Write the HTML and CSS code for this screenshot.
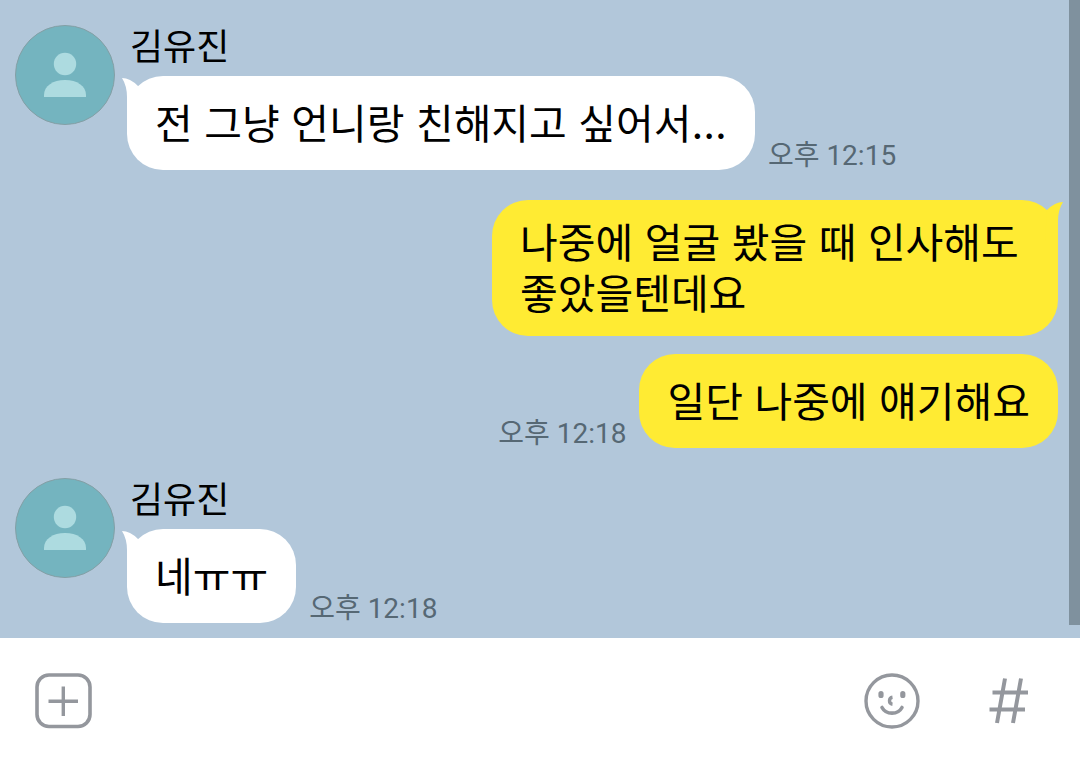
FILE: index.html
```
<!DOCTYPE html>
<html lang="ko">
<head>
  <meta charset="UTF-8">
  <meta name="viewport" content="width=device-width, initial-scale=1.0">
  <title>김유진</title>
  <link rel="stylesheet" href="styles.css">
</head>
<body>

  <!-- Chat -->
  <main class="chat">
    <div class="message received">
      <svg class="avatar" viewBox="0 0 100 100" aria-hidden="true">
        <circle class="avatar-bg" cx="50" cy="50" r="49.5"/>
        <circle class="avatar-person" cx="50" cy="39" r="11.2"/>
        <path class="avatar-person" d="M29 72v-2c0-9 9-15 21-15s21 6 21 15v2z"/>
      </svg>
      <div class="content">
        <div class="name">김유진</div>
        <div class="row">
          <div class="bubble">
            <svg class="tail" viewBox="0 0 18 40" aria-hidden="true"><path d="M0 1Q8 1 16 9L18 40H5V20Q5 9 0 1z"/></svg>
            <p>전 그냥 언니랑 친해지고 싶어서...</p>
          </div>
          <time>오후 12:15</time>
        </div>
      </div>
    </div>

    <div class="message sent">
      <div class="row">
        <div class="bubble">
          <svg class="tail" viewBox="0 0 18 40" aria-hidden="true"><path d="M18 1Q10 1 2 9L0 40H13V20Q13 9 18 1z"/></svg>
          <p>나중에 얼굴 봤을 때 인사해도 좋았을텐데요</p>
        </div>
      </div>
      <div class="row">
        <time>오후 12:18</time>
        <div class="bubble">
          <p>일단 나중에 얘기해요</p>
        </div>
      </div>
    </div>

    <div class="message received">
      <svg class="avatar" viewBox="0 0 100 100" aria-hidden="true">
        <circle class="avatar-bg" cx="50" cy="50" r="49.5"/>
        <circle class="avatar-person" cx="50" cy="39" r="11.2"/>
        <path class="avatar-person" d="M29 72v-2c0-9 9-15 21-15s21 6 21 15v2z"/>
      </svg>
      <div class="content">
        <div class="name">김유진</div>
        <div class="row">
          <div class="bubble">
            <svg class="tail" viewBox="0 0 18 40" aria-hidden="true"><path d="M0 1Q8 1 16 9L18 40H5V20Q5 9 0 1z"/></svg>
            <p>네ㅠㅠ</p>
          </div>
          <time>오후 12:18</time>
        </div>
      </div>
    </div>

    <div class="scrollbar"></div>
  </main>

  <!-- Input bar -->
  <form class="composer">
    <button type="button" aria-label="첨부">
      <svg viewBox="0 0 60 60">
        <rect x="4" y="4" width="53" height="51.500" rx="12" stroke-width="3.6"/>
        <path d="M30.3 15.5v29.5M15.5 30.3h29.5" stroke-width="3.4"/>
      </svg>
    </button>
    <input type="text" aria-label="메시지 입력">
    <button type="button" aria-label="이모티콘">
      <svg viewBox="0 0 60 60">
        <circle cx="30" cy="30" r="26" stroke-width="3.4"/>
        <path d="M19 22.5v2M40.8 22.5v2" stroke-width="5.2" stroke-linecap="round"/>
        <path d="M30.500 26.2c-4 .6-4 6.500 0 7" stroke-width="3.4"/>
        <path d="M20 36.500c4 7.500 16 7.500 20 0" stroke-width="3.600" stroke-linecap="round"/>
      </svg>
    </button>
    <button type="button" aria-label="샵검색">
      <svg viewBox="0 0 60 60">
        <path d="M27 7.500L19 52M43 7.500L35 52M14.500 21.500h35.500M11.500 38.500h35.500" stroke-width="4"/>
      </svg>
    </button>
  </form>

</body>
</html>
```
FILE: styles.css
```
* {
  box-sizing: border-box;
}
body {
  margin: 0;
  min-height: 100vh;
  display: flex;
  flex-direction: column;
  background-color: #fff;
  color: #000;
  font-family: Roboto, "Noto Sans CJK KR", sans-serif;
}
.chat {
  position: relative;
  flex-grow: 1;
  display: flex;
  flex-direction: column;
  gap: 30px;
  padding: 25px 22px 15px 15px;
  background-color: #b2c7da;
}
.message {
  display: flex;
}
.received {
  gap: 12px;
}
.sent {
  flex-direction: column;
  gap: 18px;
}
.sent .row {
  justify-content: flex-end;
}
.avatar {
  width: 100px;
  height: 100px;
  flex-shrink: 0;
}
.avatar-bg {
  fill: #74b4bf;
  stroke: #849fa5;
  stroke-width: 1;
}
.avatar-person {
  fill: #addbe0;
}
.name {
  margin-bottom: 5px;
  padding-left: 3px;
  font-size: 36px;
  line-height: 46px;
}
.row {
  display: flex;
  align-items: flex-end;
  gap: 13px;
}
.bubble {
  position: relative;
  display: flex;
  align-items: center;
  min-height: 94px;
  padding: 18px 28px 16px;
  border-radius: 36px;
  background-color: #fff;
  font-family: Inter, "Noto Sans CJK KR", sans-serif;
  font-size: 41px;
  line-height: 51px;
}
.bubble p {
  margin: 0;
}
.sent .bubble {
  max-width: 566px;
  background-color: #ffeb33;
}
.tail {
  position: absolute;
  top: 1px;
  left: -5px;
  width: 18px;
  height: 40px;
  fill: #fff;
}
.sent .tail {
  left: auto;
  right: -5px;
  fill: #ffeb33;
}
time {
  color: #566874;
  font-size: 28px;
  line-height: 28px;
}
.scrollbar {
  position: absolute;
  top: 0;
  right: 0;
  bottom: 13px;
  width: 11px;
  background-color: #7f919e;
}
.composer {
  display: flex;
  align-items: center;
  height: 126px;
  padding: 0 42px 0 33px;
}
.composer input {
  flex-grow: 1;
  min-width: 0;
  height: 60px;
  border: none;
  outline: none;
  font-family: inherit;
  font-size: 41px;
}
.composer button {
  width: 60px;
  height: 60px;
  padding: 0;
  border: none;
  background: none;
  cursor: pointer;
}
.composer button:last-child {
  margin-left: 56px;
}
.composer svg {
  display: block;
  width: 60px;
  height: 60px;
  fill: none;
  stroke: #94979d;
}
```
